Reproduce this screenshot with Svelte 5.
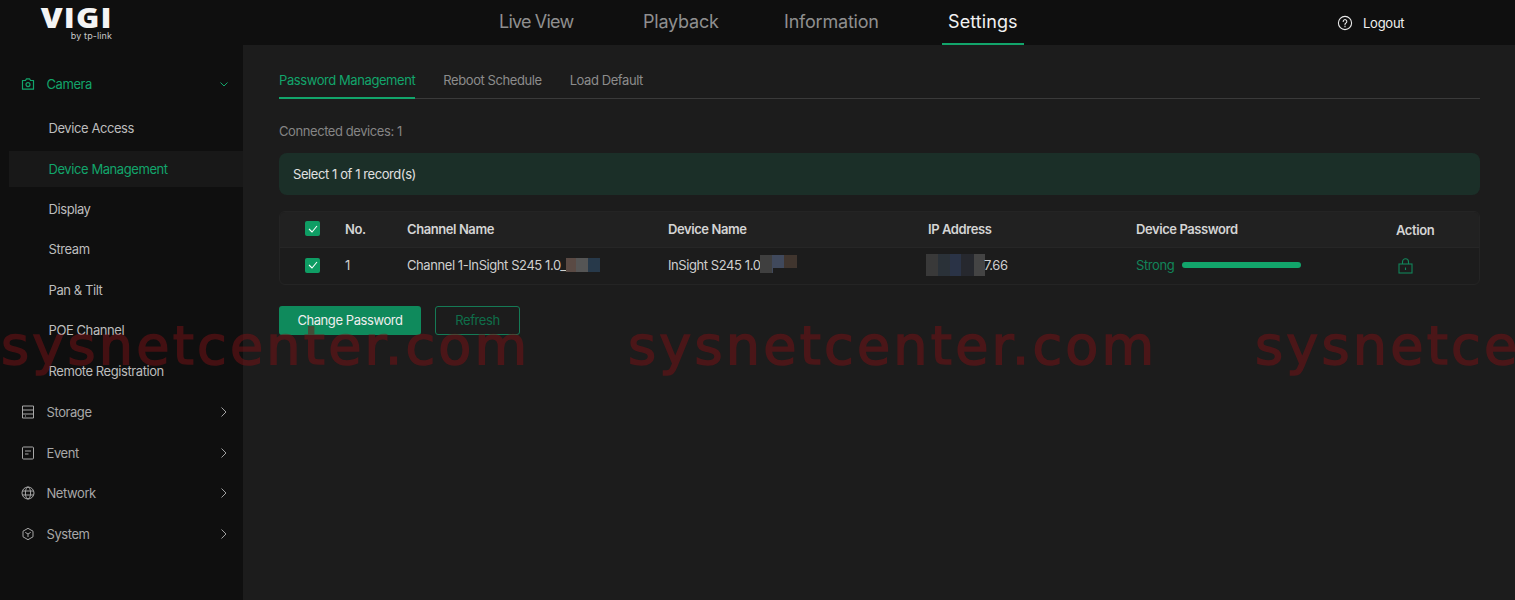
<script>
  const nav = ['Live View', 'Playback', 'Information', 'Settings'];
  const subs = ['Device Access', 'Device Management', 'Display', 'Stream', 'Pan & Tilt', 'POE Channel', 'Remote Registration'];
  const groups = ['Storage', 'Event', 'Network', 'System'];
  const tabs = ['Password Management', 'Reboot Schedule', 'Load Default'];
  const marks = ['sysnetcenter.com', 'sysnetcenter.com', 'sysnetcenter.com'];
</script>

<div class="page">
  <header class="top">
    <div class="logo">
      <span class="vigi">VIGI</span>
      <span class="by">by tp-link</span>
    </div>
    <nav class="mainnav">
      {#each nav as n}
        <span class="navitem" class:on={n === 'Settings'}>{n}</span>
      {/each}
    </nav>
    <div class="logout">
      <svg width="16" height="16" viewBox="0 0 16 16" fill="none" stroke="#e8e8e8" stroke-width="1.1">
        <circle cx="8" cy="8" r="6.6" />
        <path d="M6.2 6.4a1.8 1.8 0 1 1 2.7 1.6c-.6.3-.9.7-.9 1.4" stroke-linecap="round" />
        <path d="M8 11v.7" stroke-linecap="round" />
      </svg>
      <span>Logout</span>
    </div>
  </header>

  <div class="body">
    <aside class="side">
      <div class="group active">
        <svg class="gi" width="14" height="14" viewBox="0 0 14 14" fill="none" stroke="#12a56b" stroke-width="1.2">
          <path d="M1.5 3.5h3l1-1.7h3l1 1.7h3v8.7h-11z" stroke-linejoin="round" />
          <circle cx="7" cy="7.6" r="2" />
        </svg>
        <span class="gl">Camera</span>
        <svg class="chev" width="12" height="12" viewBox="0 0 12 12" fill="none" stroke="#12a56b"><path d="M2.5 4.5l3.5 3.5 3.5-3.5" /></svg>
      </div>
      <div class="subs">
        {#each subs as s}
          <div class="sub" class:cur={s === 'Device Management'}>{s}</div>
        {/each}
      </div>
      {#each groups as g}
        <div class="group">
          {#if g === 'Storage'}
            <svg class="gi" width="14" height="14" viewBox="0 0 14 14" fill="none" stroke="#a8a8a8"><path d="M1.5 1h11v12h-11zM1.5 5h11M1.5 9h11M4 11h1" /></svg>
          {:else if g === 'Event'}
            <svg class="gi" width="14" height="14" viewBox="0 0 14 14" fill="none" stroke="#a8a8a8"><rect x="1.5" y="1" width="11" height="12" rx="1" /><path d="M4 5h6M4 8h3.5" /></svg>
          {:else if g === 'Network'}
            <svg class="gi" width="14" height="14" viewBox="0 0 14 14" fill="none" stroke="#a8a8a8"><circle cx="7" cy="7" r="6" /><ellipse cx="7" cy="7" rx="2.6" ry="6" /><path d="M1.3 5h11.4M1.3 9h11.4" /></svg>
          {:else}
            <svg class="gi" width="14" height="14" viewBox="0 0 14 14" fill="none" stroke="#a8a8a8"><path d="M7 1.3l5 2.9v5.6l-5 2.9-5-2.9V4.2zM4.3 5.4L7 7l2.7-1.6M7 7v3" stroke-linejoin="round" /></svg>
          {/if}
          <span class="gl">{g}</span>
          <svg class="chev" width="12" height="12" viewBox="0 0 12 12" fill="none" stroke="#a0a0a0"><path d="M3.5 1.5l4.5 4.5-4.5 4.5" /></svg>
        </div>
      {/each}
    </aside>

    <main class="main">
      <div class="tabs">
        {#each tabs as t, i}
          <span class="tab" class:sel={i === 0}>{t}</span>
        {/each}
      </div>
      <p class="count">Connected devices: 1</p>
      <div class="banner">Select 1 of 1 record(s)</div>

      <div class="table">
        <div class="tr th">
          <span class="cb"><svg width="10" height="8" viewBox="0 0 10 8" fill="none" stroke="#fff" stroke-width="1.1"><path d="M1 4l3 3 5-6" /></svg></span>
          <span>No.</span><span>Channel Name</span><span>Device Name</span><span>IP Address</span><span>Device Password</span><span class="act">Action</span>
        </div>
        <div class="tr td">
          <span class="cb"><svg width="10" height="8" viewBox="0 0 10 8" fill="none" stroke="#fff" stroke-width="1.1"><path d="M1 4l3 3 5-6" /></svg></span>
          <span>1</span>
          <span class="cell">Channel 1-InSight S245 1.0_<i class="blur b1"></i></span>
          <span class="cell">InSight S245 1.0<i class="blur b2"></i></span>
          <span class="cell ip"><i class="blur b3"></i>7.66</span>
          <span class="pw">Strong<i class="bar"></i></span>
          <span class="lock">
            <svg width="15" height="16" viewBox="0 0 15 16" fill="none" stroke="#12855a" stroke-width="1.1">
              <rect x="1" y="6" width="13" height="9" />
              <path d="M4.5 6V3.8a3 3 0 0 1 6 0V6M7.5 9.5v2.5" />
            </svg>
          </span>
        </div>
      </div>

      <div class="btns">
        <button class="primary">Change Password</button>
        <button class="ghost">Refresh</button>
      </div>
    </main>
  </div>

  <div class="wm">
    {#each marks as m}<span>{m}</span>{/each}
  </div>
</div>

<style>
  :global(body) {
    margin: 0;
    background: #1c1c1c;
    overflow: hidden;
  }
  .page {
    position: relative;
    width: 1515px;
    height: 600px;
    overflow: hidden;
    font-family: Inter, "Noto Sans", sans-serif;
    font-size: 13px;
    letter-spacing: -0.42px;
    color: #c8c8c8;
    background: #1c1c1c;
  }
  .top {
    display: flex;
    height: 45px;
    background: #0f0f0f;
  }
  .logo {
    width: 112px;
    flex: none;
    display: flex;
    flex-direction: column;
    align-items: flex-end;
    color: #f4f4f4;
  }
  .vigi {
    font-size: 28px;
    font-weight: 800;
    letter-spacing: 1px;
    margin-right: -1px;
    line-height: 30px;
    margin-top: 2px;
    font-family: "Open Sans", sans-serif;
    transform: scaleX(1.13);
    transform-origin: right center;
  }
  .by {
    font-size: 9px;
    letter-spacing: 0.1px;
    line-height: 10px;
    margin-top: -1px;
    color: #c8c8c8;
  }
  .mainnav {
    margin-left: 387px;
    display: grid;
    grid-template-columns: 144px 141px 164px auto;
    font-size: 18px;
    color: #8f8f8f;
    letter-spacing: -0.2px;
  }
  .navitem {
    height: 44px;
    line-height: 44px;
  }
  .navitem:first-child {
    letter-spacing: -0.8px;
  }
  .on {
    color: #f2f2f2;
    border-bottom: 2px solid #12a56b;
    padding: 0 6px;
    margin: 0 -6px;
    height: 43px;
    letter-spacing: 0.1px;
  }
  .logout {
    position: absolute;
    left: 1337px;
    top: 15px;
    display: flex;
    align-items: center;
    gap: 10px;
    color: #f0f0f0;
    letter-spacing: -0.25px;
  }
  .body {
    display: flex;
    height: 555px;
  }
  .side {
    width: 243px;
    flex: none;
    background: #0f0f0f;
    padding-top: 19px;
    box-sizing: border-box;
  }
  .group {
    height: 40.5px;
    display: flex;
    align-items: center;
    padding: 0 13px 0 21px;
    color: #a8a8a8;
  }
  .group.active {
    color: #12a56b;
    height: 46px;
    padding-bottom: 6px;
    box-sizing: border-box;
  }
  .gl {
    margin-left: 11.5px;
    flex: 1;
  }
  .subs {
    margin-bottom: -1px;
  }
  .sub {
    height: 36px;
    margin: 0 0 4.5px 9px;
    padding-left: 39.5px;
    line-height: 36px;
    color: #bdbdbd;
  }
  .sub.cur {
    background: #181818;
    color: #12a56b;
    margin-top: 1.5px;
    margin-bottom: 4px;
  }
  .main {
    flex: 1;
    padding: 0 35px 0 36px;
  }
  .tabs {
    display: flex;
    gap: 28px;
    height: 54px;
    border-bottom: 1px solid #3a3a3a;
    box-sizing: border-box;
    color: #8c8c8c;
  }
  .tab {
    line-height: 71px;
    height: 54px;
    box-sizing: border-box;
  }
  .sel {
    color: #12a56b;
    border-bottom: 2px solid #12a56b;
  }
  .count {
    margin: 24px 0 0;
    line-height: 16px;
    color: #858585;
  }
  .banner {
    margin-top: 14px;
    height: 42px;
    line-height: 42px;
    padding-left: 14px;
    background: #1b2f28;
    border-radius: 8px;
    color: #e0e0e0;
  }
  .table {
    margin-top: 16px;
    border: 1px solid #242424;
    border-radius: 6px;
    overflow: hidden;
  }
  .tr {
    display: grid;
    grid-template-columns: 65px 62px 261px 260px 208px 260px 1fr;
    align-items: center;
    height: 36px;
    padding-bottom: 2px;
    box-sizing: border-box;
  }
  .tr > :first-child {
    margin-left: 25px;
  }
  .th {
    background: #212121;
    font-weight: 600;
    color: #d4d4d4;
    border-bottom: 1px solid #262626;
    letter-spacing: -0.42px;
  }
  .td {
    color: #cfcfcf;
  }
  .act {
    margin-top: 2px;
  }
  .cb {
    width: 15px;
    height: 15px;
    background: #0f9d64;
    border-radius: 2px;
    display: flex;
    align-items: center;
    justify-content: center;
  }
  .cell {
    display: flex;
    align-items: center;
  }
  .blur {
    display: block;
    height: 14px;
  }
  .b1 {
    width: 34px;
    background: linear-gradient(90deg, #5a4a44 0 30%, #555 30% 65%, #27394a 65%);
  }
  .b2 {
    width: 37px;
    height: 18px;
    margin-top: -2px;
    background:
      linear-gradient(#1c1c1c, #1c1c1c) right bottom / 67% 5px no-repeat,
      linear-gradient(90deg, #3f3f3f 0 33%, #40495c 33% 66%, #40352e 66%);
  }
  .ip {
    margin-left: -2px;
  }
  .b3 {
    width: 59px;
    height: 22px;
    margin-right: -1px;
    background: linear-gradient(90deg, #393939 0 20%, #2a3138 20% 40%, #2a3346 40% 60%, #26282e 60% 82%, #444 82%);
  }
  .pw {
    display: flex;
    align-items: center;
    gap: 8px;
    color: #12855a;
  }
  .bar {
    display: block;
    width: 119px;
    height: 6px;
    border-radius: 3px;
    background: #12a56b;
  }
  .lock {
    display: flex;
    margin-left: 2px;
    margin-top: 2px;
  }
  .btns {
    margin-top: 21px;
    display: flex;
    gap: 14px;
  }
  button {
    font: inherit;
    letter-spacing: inherit;
    height: 29px;
    border-radius: 3px;
    padding: 0 0 2px;
  }
  .primary {
    width: 142px;
    background: #0f8a5c;
    border: 0;
    color: #eee;
  }
  .ghost {
    width: 85px;
    background: transparent;
    border: 1px solid #157a55;
    color: #0f6e4a;
  }
  .wm {
    position: absolute;
    left: 0;
    top: 316px;
    display: flex;
    pointer-events: none;
    opacity: 0.5;
    color: #7a1216;
    -webkit-text-stroke: 1.5px #7a1216;
    font-family: "DejaVu Sans", sans-serif;
    font-size: 54px;
    font-weight: 400;
    line-height: 60px;
    letter-spacing: 3.2px;
    white-space: nowrap;
  }
  .wm span {
    flex: none;
    width: 627px;
    padding-left: 1px;
    box-sizing: border-box;
    display: block;
  }
</style>
